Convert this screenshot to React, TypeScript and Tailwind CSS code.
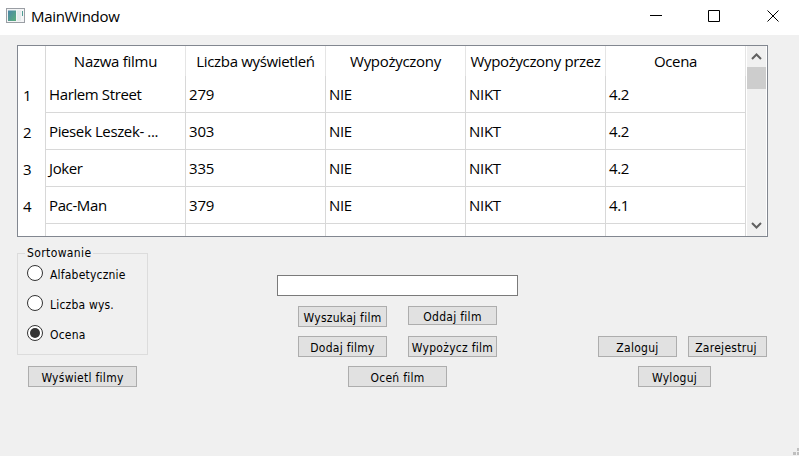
import type { ReactNode } from "react";

const columns = [
  { label: "Nazwa filmu", track: "tracking-[-0.27px]" },
  { label: "Liczba wyświetleń", track: "tracking-[-0.34px]" },
  { label: "Wypożyczony", track: "tracking-[-0.3px]" },
  { label: "Wypożyczony przez", track: "tracking-[-0.34px]" },
  { label: "Ocena", track: "tracking-[-0.35px]" },
];

const cellTracks = [
  "tracking-[-0.38px]",
  "tracking-[-0.2px]",
  "tracking-[-0.4px]",
  "tracking-[-0.3px]",
  "tracking-[-0.4px]",
];

const rows = [
  ["Harlem Street", "279", "NIE", "NIKT", "4.2"],
  ["Piesek Leszek- ...", "303", "NIE", "NIKT", "4.2"],
  ["Joker", "335", "NIE", "NIKT", "4.2"],
  ["Pac-Man", "379", "NIE", "NIKT", "4.1"],
];

function TitleBar() {
  return (
    <header className="flex h-[35px] shrink-0 items-start bg-white pl-[6px]">
      <svg className="mt-[8px]" width="19" height="16" viewBox="0 0 19 16">
        <defs>
          <linearGradient id="pane" x1="0" y1="0" x2="1" y2="1">
            <stop offset="0" stopColor="#4a86a8" />
            <stop offset="1" stopColor="#5cae7c" />
          </linearGradient>
        </defs>
        <rect x="0.5" y="0.5" width="18" height="14" fill="#f4f5f6" stroke="#9a9ea4" />
        <rect x="2" y="2.5" width="8" height="10.5" fill="url(#pane)" />
        <rect x="11" y="2.5" width="4" height="10.5" fill="#e6eaec" />
        <rect x="16" y="3" width="1" height="5" fill="#4f9d94" />
      </svg>
      <span className="ml-[6px] mt-[6px] text-[15px] leading-5 tracking-[-0.3px]">MainWindow</span>
      <div className="ml-auto flex h-full items-center">
        <svg width="149" height="35" viewBox="650 0 149 35" fill="none" stroke="#000">
          <path d="M650 15.5h12" />
          <path d="M708.5 10.5h11v11h-11z" />
          <path d="M767.5 10.5l11 11M778.5 10.5l-11 11" />
        </svg>
      </div>
    </header>
  );
}

function FilmTable() {
  return (
    <div className="ml-[17px] mt-[10px] flex h-[192px] w-[751px] shrink-0 overflow-hidden border border-[#828790] bg-white text-[15px] leading-5">
      <div className="w-[27px] shrink-0 pt-[30px]">
        {rows.map((_, i) => (
          <div key={i} className="flex h-[37px] items-center pl-[5px] pt-px">
            {i + 1}
          </div>
        ))}
      </div>
      <div className="w-[701px] shrink-0 border-l border-[#d8d8d8]">
        <div className="flex h-[30px]">
          {columns.map((c) => (
            <div
              key={c.label}
              className={`flex w-[140px] items-center justify-center whitespace-nowrap border-r border-[#e5e5e5] ${c.track}`}
            >
              {c.label}
            </div>
          ))}
        </div>
        {rows.map((r, i) => (
          <div key={i} className="flex h-[37px]">
            {r.map((cell, j) => (
              <div
                key={j}
                className={`flex w-[140px] items-center whitespace-pre border-b border-r border-[#d8d8d8] pl-[3px] ${cellTracks[j]}`}
              >
                {cell}
              </div>
            ))}
          </div>
        ))}
        <div className="flex h-[37px]">
          {columns.map((c) => (
            <div key={c.label} className="w-[140px] border-r border-[#d8d8d8]" />
          ))}
        </div>
      </div>
      <div className="ml-px flex w-[19px] flex-col items-center bg-[#f0f0f0]">
        <svg className="h-[21px] w-[19px] shrink-0" viewBox="0 0 19 21" fill="none" stroke="#606060" strokeWidth="2">
          <path d="M5 13l4.5-4.5L14 13" />
        </svg>
        <div className="h-[22px] w-full bg-[#cdcdcd]" />
        <svg className="mt-auto h-[21px] w-[19px] shrink-0" viewBox="0 0 19 21" fill="none" stroke="#606060" strokeWidth="2">
          <path d="M5 8l4.5 4.5L14 8" />
        </svg>
      </div>
    </div>
  );
}

function Radio({ label, checked = false }: { label: string; checked?: boolean }) {
  return (
    <label className="flex h-[30px] items-center">
      <span className="flex size-4 shrink-0 items-center justify-center rounded-full border border-[#333] bg-white">
        {checked && <span className="size-[10px] rounded-full bg-[#333]" />}
      </span>
      <span className="ml-[7px] pt-[3px] tracking-[0.2px]">{label}</span>
    </label>
  );
}

function Button({ children, className }: { children: ReactNode; className: string }) {
  return (
    <button
      className={`flex shrink-0 items-center justify-center whitespace-nowrap border border-[#adadad] bg-[#e1e1e1] pt-[2px] leading-4 tracking-[0.28px] ${className}`}
    >
      {children}
    </button>
  );
}

export default function App() {
  return (
    <div className="flex h-[456px] w-[799px] flex-col overflow-hidden bg-[#f0f0f0] font-['Open_Sans','Noto_Sans',sans-serif] text-black">
      <TitleBar />
      <FilmTable />
      <main className="flex flex-1 font-['DejaVu_Sans_Condensed','DejaVu_Sans',sans-serif] text-[12px]">
        <section className="ml-[17px] w-[131px] pt-[8px]">
          <fieldset className="h-[110px] w-[131px] border border-[#dcdcdc] pl-[9px]">
            <legend className="-ml-[2px] px-[2px] leading-[17px] tracking-[0.38px]">Sortowanie</legend>
            <div className="-mt-[4px]">
              <Radio label="Alfabetycznie" />
              <Radio label="Liczba wys." />
              <Radio label="Ocena" checked />
            </div>
          </fieldset>
          <Button className="ml-[11px] mt-[11px] h-[21px] w-[109px]">Wyświetl filmy</Button>
        </section>
        <section className="ml-[129px] w-[241px] pt-[38px]">
          <input className="block h-[21px] w-[241px] border border-[#7a7a7a] bg-white px-1 outline-none" />
          <div className="mt-[10px] flex gap-[21px] pl-[21px]">
            <Button className="h-[21px] w-[89px]">Wyszukaj film</Button>
            <Button className="h-[19px] w-[89px]">Oddaj film</Button>
          </div>
          <div className="mt-[9px] flex gap-[21px] pl-[21px]">
            <Button className="h-[21px] w-[89px]">Dodaj filmy</Button>
            <Button className="h-[21px] w-[89px]">Wypożycz film</Button>
          </div>
          <Button className="ml-[71px] mt-[9px] h-[21px] w-[99px]">Oceń film</Button>
        </section>
        <section className="ml-[80px] w-[169px] pt-[99px]">
          <div className="flex gap-[11px]">
            <Button className="h-[21px] w-[79px]">Zaloguj</Button>
            <Button className="h-[21px] w-[79px] pr-[3px]">Zarejestruj</Button>
          </div>
          <Button className="ml-[40px] mt-[9px] h-[21px] w-[73px]">Wyloguj</Button>
        </section>
        <svg className="ml-auto mt-auto h-[8px] w-[6px]" viewBox="0 0 6 8" fill="#bfbfbf">
          <path d="M4 0h2v3h-2zM4 4h2v3h-2zM0 4h3v3h-3z" />
        </svg>
      </main>
    </div>
  );
}
